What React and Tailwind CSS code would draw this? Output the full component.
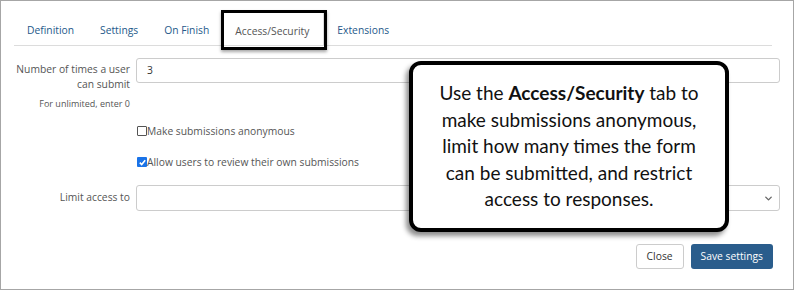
import React from 'react'
import { ChevronDown } from 'lucide-react'

const tabs = ['Definition', 'Settings', 'On Finish', 'Access/Security', 'Extensions']

const App = () => {
  return (
    <div className="relative w-[794px] h-[290px] overflow-hidden border border-[#a6a6a6] bg-white font-['Open_Sans',sans-serif] text-[#555]">
      {/* Tabs */}
      <div className="ml-[13px] mr-[21px] mt-[10px] flex border-b border-[#dcdcdc] text-[10.3px]">
        {tabs.map((t) => {
          const active = t === 'Access/Security'
          return (
            <div
              key={t}
              className={
                active
                  ? 'relative flex h-[34px] items-center rounded-t-[3px] border border-b-0 border-[#dcdcdc] pl-[12px] pr-[14px] pt-[6px] text-[#555]'
                  : 'flex h-[34px] items-center px-[13px] pt-[6px] text-[#24598a]'
              }
            >
              {t}
              {active && (
                <div className="absolute -left-[2px] -right-[4px] -top-[2px] -bottom-[5px] border-[3px] border-black shadow-[0_2px_3px_rgba(0,0,0,0.35)]" />
              )}
            </div>
          )
        })}
      </div>

      {/* Form */}
      <div className="mt-[12px] text-[10.3px]">
        <div className="flex">
          <div className="w-[129px] text-right">
            <div className="pt-[4px] leading-[15px]">Number of times a user can submit</div>
            <div className="mt-[6px] text-[9px] leading-[12px]">For unlimited, enter 0</div>
          </div>
          <div className="ml-[6px] mr-[13px] flex-1">
            <div className="flex h-[25px] items-center rounded-[3px] border border-[#ccc] px-[10px] text-[#333]">3</div>
          </div>
        </div>

        <div className="ml-[136px] mt-[13px] flex items-center leading-[16px]">
          <span className="h-[10px] w-[10px] rounded-[1px] border border-[#555]" />
          <span>Make submissions anonymous</span>
        </div>

        <div className="ml-[136px] mt-[15px] flex items-center leading-[16px]">
          <span className="flex h-[10px] w-[10px] items-center justify-center rounded-[1px] bg-[#1a73e8]">
            <svg viewBox="0 0 10 10" className="h-[9px] w-[9px]">
              <path d="M2 5.2 L4.1 7.3 L8 2.6" fill="none" stroke="white" strokeWidth="1.8" />
            </svg>
          </span>
          <span>Allow users to review their own submissions</span>
        </div>

        <div className="mt-[15px] flex items-center">
          <div className="w-[129px] text-right">Limit access to</div>
          <div className="ml-[6px] mr-[13px] flex h-[26px] flex-1 items-center justify-end rounded-[3px] border border-[#ccc] pr-[5px]">
            <ChevronDown className="h-[11px] w-[11px] text-[#666]" strokeWidth={3} />
          </div>
        </div>

        <div className="mr-[20px] mt-[33px] flex justify-end gap-[7px]">
          <div className="flex h-[25px] items-center rounded-[3px] border border-[#ccc] px-[10px] text-[#333]">Close</div>
          <div className="flex h-[25px] items-center rounded-[3px] bg-[#2a5d8c] px-[10px] text-white">Save settings</div>
        </div>
      </div>

      {/* Callout annotation */}
      <div className="absolute left-[408px] top-[60px] flex h-[171px] w-[320px] items-center justify-center rounded-[12px] border-[4px] border-black bg-white px-[16px] text-center font-['Lato',sans-serif] text-[19px] leading-[26.5px] text-[#111] shadow-[-3px_4px_5px_rgba(0,0,0,0.45)]">
        <p>
          Use the <b>Access/Security</b> tab to make submissions anonymous, limit how many times the form can be submitted, and restrict access to responses.
        </p>
      </div>
    </div>
  )
}

export default App
